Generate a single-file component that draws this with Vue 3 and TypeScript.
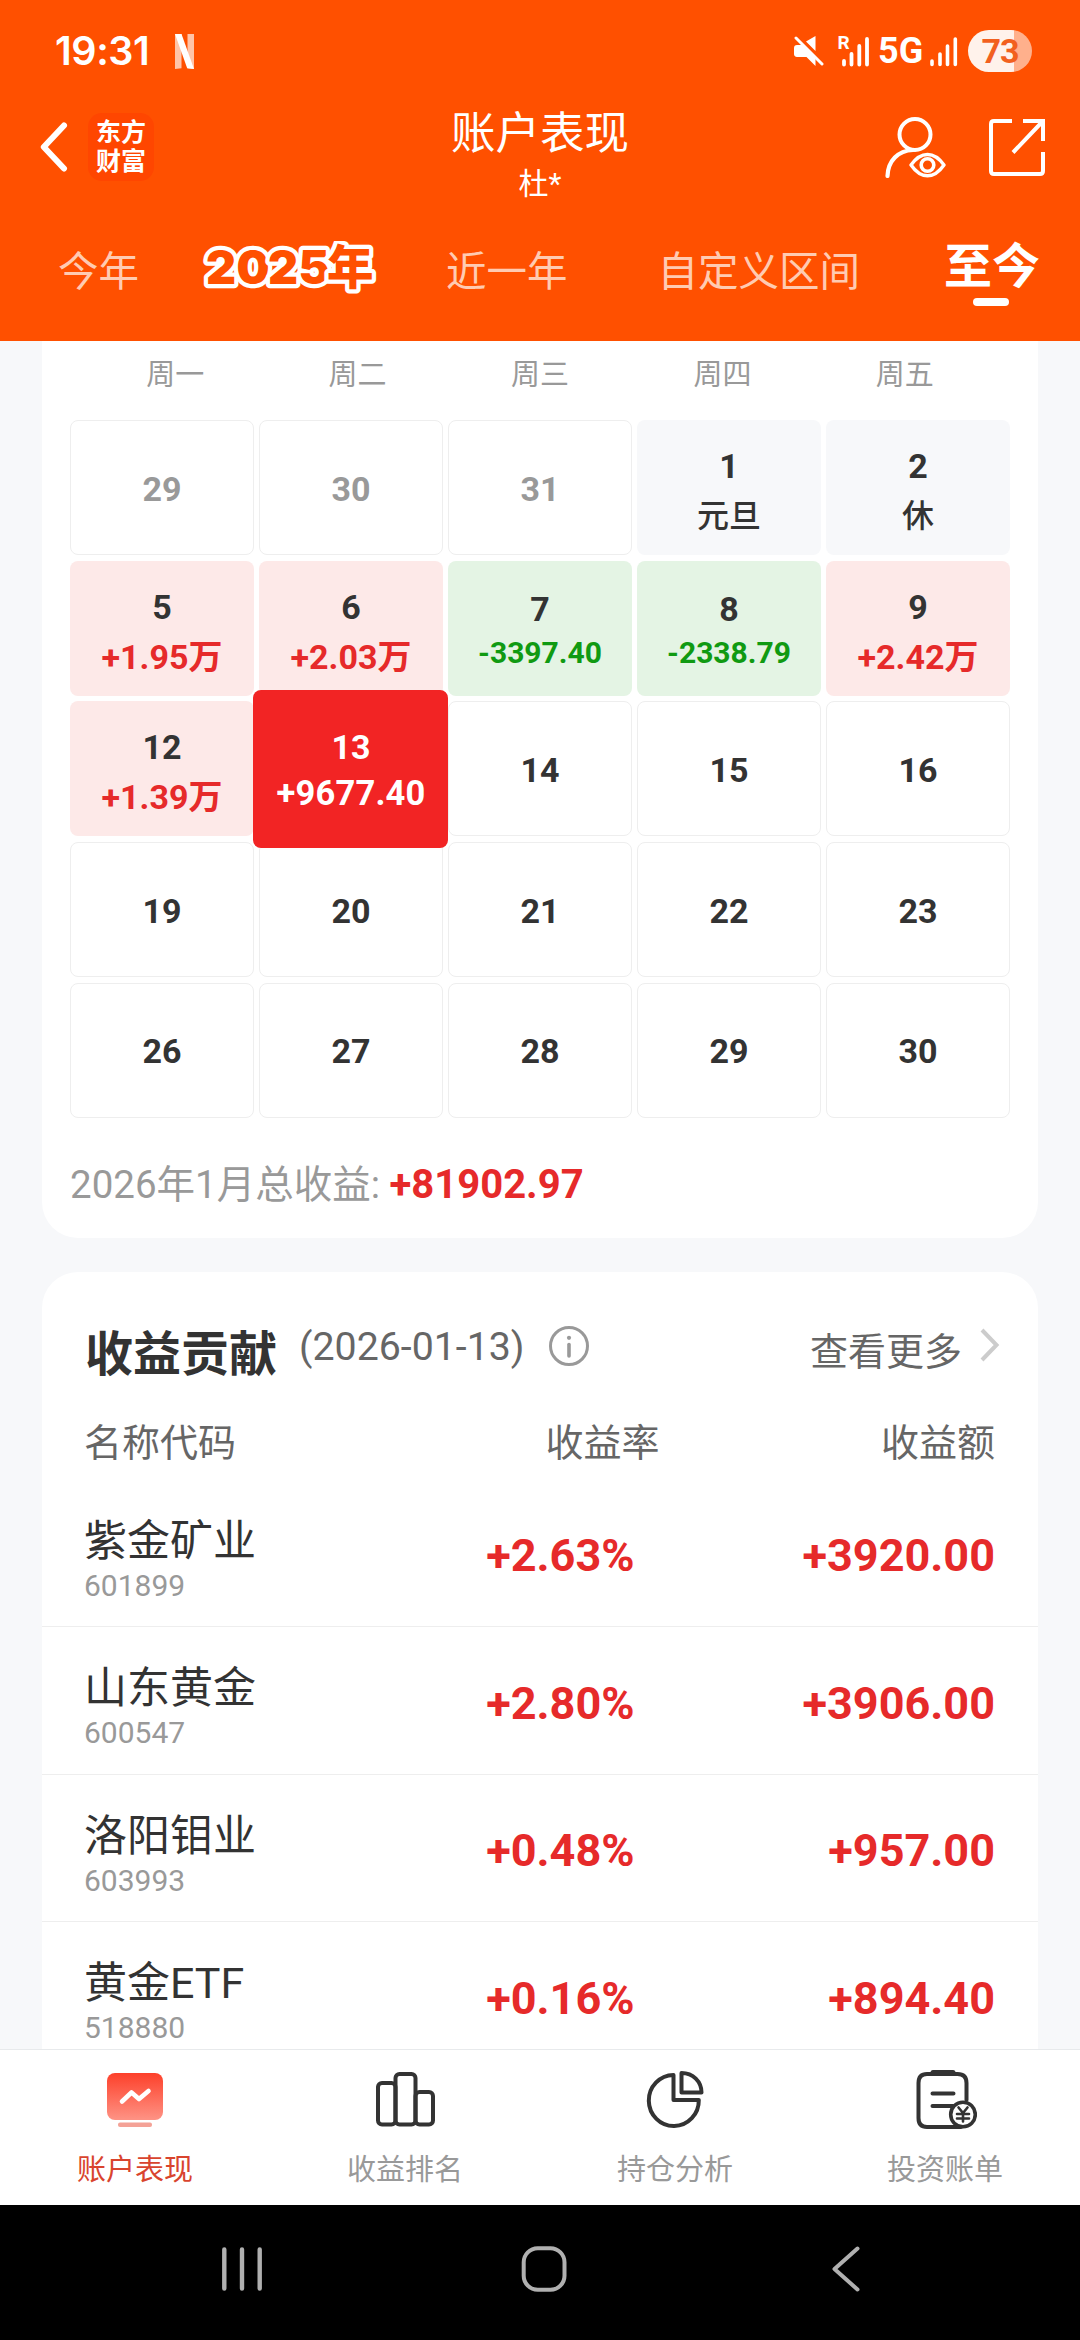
<script setup lang="ts">
type DayKind = 'plain' | 'muted' | 'rest' | 'up' | 'down' | 'selected'

interface Day {
  day: number
  kind: DayKind
  note?: string
}

interface Holding {
  name: string
  code: string
  rate: string
  amount: string
}

const weekdays: string[] = ['周一', '周二', '周三', '周四', '周五']

const days: Day[] = [
  { day: 29, kind: 'muted' },
  { day: 30, kind: 'muted' },
  { day: 31, kind: 'muted' },
  { day: 1, kind: 'rest', note: '元旦' },
  { day: 2, kind: 'rest', note: '休' },
  { day: 5, kind: 'up', note: '+1.95万' },
  { day: 6, kind: 'up', note: '+2.03万' },
  { day: 7, kind: 'down', note: '-3397.40' },
  { day: 8, kind: 'down', note: '-2338.79' },
  { day: 9, kind: 'up', note: '+2.42万' },
  { day: 12, kind: 'up', note: '+1.39万' },
  { day: 13, kind: 'selected', note: '+9677.40' },
  ...[14, 15, 16, 19, 20, 21, 22, 23, 26, 27, 28, 29, 30].map(
    (day): Day => ({ day, kind: 'plain' }),
  ),
]

const holdings: Holding[] = [
  { name: '紫金矿业', code: '601899', rate: '+2.63%', amount: '+3920.00' },
  { name: '山东黄金', code: '600547', rate: '+2.80%', amount: '+3906.00' },
  { name: '洛阳钼业', code: '603993', rate: '+0.48%', amount: '+957.00' },
  { name: '黄金ETF', code: '518880', rate: '+0.16%', amount: '+894.40' },
]
</script>

<template>
  <div class="screen">
    <header class="header">
      <div class="status">
        <span class="clock">19:31</span>
        <svg class="netflix" width="19" height="35" viewBox="0 0 19 35">
          <path d="M0 0h6.5v34.2L0 35zM12.500 0H19v35l-6.500-.8z" fill="#ffc4a8" />
          <path d="M0 0h6.500L19 35l-6.800-.8z" fill="#fff" />
        </svg>
        <div class="status-right">
          <svg class="mute" width="30" height="30" viewBox="0 0 30 30">
            <path d="M12 5.500 21.500 0v15zM3 9h6l12.500 12.500V30l-9-9H3q-3-.5-3-3v-6q0-3 3-3z" fill="#fff" />
            <path d="M2 2 28 28" stroke="#fff" stroke-width="3" stroke-linecap="round" />
          </svg>
          <svg class="signal-r" width="34" height="42" viewBox="0 -4 34 42">
            <text x="0.500" y="15" font-family="Roboto" font-weight="700" font-size="19" fill="#fff">R</text>
            <path d="M7 27v3.500M14.500 20v10.500M22.300 12v18.500M30 5v25.500" stroke="#fff" stroke-width="3.800" stroke-linecap="round" />
          </svg>
          <span class="net">5G</span>
          <svg class="signal" width="28" height="32" viewBox="0 0 28 32">
            <path d="M2 26v3.500M10 19v10.500M17.500 11v18.500M25.300 4v25.500" stroke="#fff" stroke-width="3.600" stroke-linecap="round" />
          </svg>
          <span class="battery">73</span>
        </div>
      </div>

      <div class="nav">
        <div class="nav-left">
          <svg width="28" height="50" viewBox="0 0 28 50">
            <path d="M24 3.500 3.800 25 24 46.500" fill="none" stroke="#fff" stroke-width="6" stroke-linecap="round" stroke-linejoin="round" />
          </svg>
          <div class="logo"><span>东方</span><span>财富</span></div>
        </div>
        <div class="nav-title">
          <h1>账户表现</h1>
          <p>杜*</p>
        </div>
        <div class="nav-right">
          <svg width="62" height="62" viewBox="0 0 62 62" fill="none" stroke="#fff" stroke-linecap="round">
            <circle cx="31" cy="18.500" r="15.500" stroke-width="4" />
            <path d="M3.500 60C4 45 14 34.500 29 34" stroke-width="4.200" />
            <path d="M27 49Q34.500 38.500 43.500 38.500T60 49Q52.500 59.800 43.500 59.800T27 49z" stroke-width="3.400" stroke-linejoin="round" />
            <circle cx="43.500" cy="49" r="6.300" stroke-width="3.600" />
          </svg>
          <svg width="56" height="57" viewBox="0 0 56 57" fill="none" stroke="#fff" stroke-width="4">
            <path d="M23 2H5Q2 2 2 5V52Q2 55 5 55H51Q54 55 54 52V33M34 2H54V22M54 2 24 33.500" />
          </svg>
        </div>
      </div>

      <nav class="tabs">
        <span class="tab">今年</span>
        <svg class="year" width="184" height="61" viewBox="0 0 184 61">
          <text x="4 34.500 66 96.500 125" y="43">2025年</text>
        </svg>
        <span class="tab recent">近一年</span>
        <span class="tab custom">自定义区间</span>
        <span class="tab active">至今</span>
      </nav>
    </header>

    <main class="content">
      <section class="card calendar">
        <div class="weekdays">
          <span v-for="w in weekdays" :key="w">{{ w }}</span>
        </div>
        <div class="days">
          <div v-for="(d, i) in days" :key="i" class="cell" :class="[d.kind, { single: !d.note }]">
            <span class="num">{{ d.day }}</span>
            <span v-if="d.note" class="note">{{ d.note }}</span>
          </div>
        </div>
        <p class="summary">2026年1月总收益: <b>+81902.97</b></p>
      </section>

      <section class="card contribution">
        <div class="head">
          <h2>收益贡献</h2>
          <span class="date">(2026-01-13)</span>
          <svg class="info" width="40" height="40" viewBox="0 0 40 40" fill="none" stroke="#999">
            <circle cx="20" cy="20" r="18.500" stroke-width="3" />
            <path d="M20 18.500V30" stroke-width="3.600" stroke-linecap="round" />
            <circle cx="20" cy="11.800" r="2.100" fill="#999" stroke="none" />
          </svg>
          <span class="more">查看更多</span>
          <svg class="chev" width="20" height="34" viewBox="0 0 20 34">
            <path d="M2 2 16.500 17 2 32" fill="none" stroke="#ccc" stroke-width="4" />
          </svg>
        </div>
        <div class="cols">
          <span>名称代码</span><span class="c-rate">收益率</span><span class="c-amount">收益额</span>
        </div>
        <div v-for="h in holdings" :key="h.code" class="row">
          <div class="stock">
            <span class="name">{{ h.name }}</span>
            <span class="code">{{ h.code }}</span>
          </div>
          <span class="rate">{{ h.rate }}</span>
          <span class="amount">{{ h.amount }}</span>
        </div>
      </section>
    </main>

    <footer class="tabbar">
      <div class="item on">
        <svg width="64" height="64" viewBox="0 0 64 64">
          <defs>
            <linearGradient id="tile" x1="0" y1="0" x2="0" y2="1">
              <stop offset="0" stop-color="#fd402a" />
              <stop offset="1" stop-color="#fe9385" />
            </linearGradient>
          </defs>
          <rect x="4" y="5" width="56" height="47" rx="8" fill="url(#tile)" />
          <path d="M19 33.500 28.500 24.500 36 31 45.500 23" fill="none" stroke="#fff" stroke-width="4.600" stroke-linecap="round" stroke-linejoin="round" />
          <rect x="15" y="54.500" width="34" height="4.500" rx="2" fill="#f4a297" />
        </svg>
        <span>账户表现</span>
      </div>
      <div class="item">
        <svg width="64" height="64" viewBox="0 0 64 64" fill="none" stroke="#333" stroke-width="4">
          <rect x="5" y="15" width="17.500" height="41.500" rx="4" />
          <rect x="22.500" y="6" width="20" height="50.500" rx="4" />
          <rect x="42.500" y="24" width="17.500" height="32.500" rx="4" />
        </svg>
        <span>收益排名</span>
      </div>
      <div class="item">
        <svg width="64" height="64" viewBox="0 0 64 64" fill="none" stroke="#333" stroke-width="4" stroke-linejoin="round">
          <path d="M30.500 7A25 25.500 0 1 0 55.800 32H30.500z" />
          <path d="M38.500 5V24.500H58.500C58.500 13.500 50 5 38.500 5z" />
        </svg>
        <span>持仓分析</span>
      </div>
      <div class="item">
        <svg width="64" height="64" viewBox="0 0 64 64" fill="none" stroke="#333" stroke-width="4" stroke-linecap="round">
          <path d="M53.500 32V15Q53.500 6 44.500 6H14Q5.500 6 5.500 15V50Q5.500 59 14 59H48" />
          <path d="M20 4.500H40" stroke-width="5" />
          <path d="M19.500 25.500H40.500M19.500 38H40" />
          <circle cx="50" cy="46.500" r="12.300" fill="#fff" stroke-width="3.600" />
          <path d="M45.500 39.500 50 45 54.500 39.500M44 46H56M44 50.500H56M50 45V53.500" stroke-width="2.600" />
        </svg>
        <span>投资账单</span>
      </div>
    </footer>

    <div class="sysnav">
      <svg class="recents" width="44" height="48" viewBox="0 0 44 48">
        <path d="M4.300 4.500V43.500M22 4.500V43.500M39.700 4.500V43.500" stroke="#b0b0b0" stroke-width="4.400" stroke-linecap="round" />
      </svg>
      <svg class="home" width="48" height="48" viewBox="0 0 48 48">
        <rect x="3.700" y="3.200" width="40.800" height="41.600" rx="14" fill="none" stroke="#b0b0b0" stroke-width="4" />
      </svg>
      <svg class="back" width="32" height="48" viewBox="0 0 32 48">
        <path d="M27.500 3.500 4.500 24 27.500 44.500" fill="none" stroke="#b0b0b0" stroke-width="4" stroke-linecap="round" stroke-linejoin="round" />
      </svg>
    </div>
  </div>
</template>

<style>
body {
  margin: 0;
}
</style>

<style scoped>
.screen {
  width: 1080px;
  height: 2340px;
  display: flex;
  flex-direction: column;
  overflow: hidden;
  background: #f7f8fa;
  color: #333;
  font-family: Roboto, 'Noto Sans CJK SC', sans-serif;
}
h1, h2, p {
  margin: 0;
  font-weight: 400;
}
svg {
  display: block;
  flex: none;
}
span, p, h1, h2 {
  white-space: nowrap;
}

/* header */
.header {
  height: 341px;
  flex: none;
  background: #ff5000;
  color: #fff;
}
.status {
  box-sizing: border-box;
  height: 94px;
  padding: 8px 48px 0 55px;
  display: flex;
  align-items: center;
}
.clock {
  width: 96px;
  font: 600 39.500px/50px Inter, sans-serif;
  letter-spacing: -0.400px;
}
.netflix {
  margin-left: 24px;
}
.status-right {
  margin-left: auto;
  display: flex;
  align-items: center;
}
.mute {
  margin-right: 13px;
}
.net {
  width: 44px;
  margin: 0 8px 0 7px;
  font-size: 36px;
  font-weight: 700;
  line-height: 44px;
}
.signal {
  margin-right: 10px;
}
.battery {
  width: 64px;
  height: 42px;
  border-radius: 21px;
  background: linear-gradient(90deg, #fff2eb 46px, #ffb08c 46px);
  color: #f2601e;
  font-size: 34px;
  font-weight: 700;
  line-height: 43px;
  letter-spacing: -1px;
  text-align: center;
}
.nav {
  height: 106px;
  display: grid;
  grid-template-columns: 1fr auto 1fr;
}
.nav-left {
  display: flex;
  align-items: center;
  padding-left: 40px;
}
.logo {
  box-sizing: border-box;
  width: 66px;
  height: 68px;
  margin-left: 20px;
  padding-top: 5px;
  border-radius: 14px;
  background: #ff4600;
  display: flex;
  flex-direction: column;
  align-items: center;
  font-size: 25px;
  font-weight: 700;
  line-height: 29px;
}
.nav-title {
  padding-top: 12px;
  text-align: center;
}
.nav-title h1 {
  font-size: 44.5px;
  line-height: 56px;
}
.nav-title p {
  margin-top: 7px;
  font-size: 30px;
  line-height: 30px;
}
.nav-right {
  display: flex;
  align-items: center;
  justify-content: flex-end;
  gap: 43px;
  padding-right: 35px;
}
.tabs {
  display: flex;
  padding: 41px 0 0 58px;
}
.tab {
  color: #ffcbb2;
  font-size: 40.500px;
  line-height: 62px;
}
.year {
  margin-left: 63px;
}
.year text {
  font-family: Inter, 'Noto Sans CJK SC', sans-serif;
  font-size: 46.500px;
  font-weight: 900;
  fill: #ff5000;
  stroke: #fff;
  stroke-width: 8.500px;
  stroke-linejoin: round;
  paint-order: stroke fill;
}
.recent {
  margin-left: 60px;
}
.custom {
  margin-left: 90px;
}
.active {
  position: relative;
  margin-left: 84px;
  color: #fff;
  font-size: 48px;
  font-weight: 700;
  line-height: 51px;
}
.active::after {
  content: '';
  position: absolute;
  left: 29px;
  top: 57px;
  width: 36px;
  height: 8px;
  border-radius: 4px;
  background: #fff;
}

/* cards */
.content {
  height: 1708px;
  flex: none;
  overflow: hidden;
}
.card {
  margin: 0 42px;
  background: #fff;
}
.calendar {
  height: 897px;
  border-radius: 0 0 36px 36px;
}
.weekdays {
  display: grid;
  grid-template-columns: repeat(5, 1fr);
  padding: 0 42px;
  height: 68px;
  line-height: 68px;
  font-size: 29px;
  color: #999;
  text-align: center;
}
.days {
  display: grid;
  grid-template-columns: repeat(5, 1fr);
  grid-auto-rows: 135px;
  gap: 5.700px 5px;
  padding: 11px 28px 0;
}
.cell {
  box-sizing: border-box;
  position: relative;
  border-radius: 8px;
  padding-top: 7px;
  display: flex;
  flex-direction: column;
  align-items: center;
  justify-content: center;
  font-size: 34px;
  font-weight: 700;
  line-height: 50px;
}
.cell.single {
  padding-top: 2px;
  border: 1px solid #eee;
}
.cell.muted {
  color: #999;
}
.cell.rest {
  background: #f7f8fa;
}
.rest .note {
  font-size: 32px;
  font-weight: 500;
}
.cell.up {
  background: #fde9e8;
}
.up .note {
  color: #e62a2a;
}
.cell.down {
  background: #e4f4e4;
  padding-top: 6px;
  line-height: 44px;
}
.down .note {
  color: #109a12;
  font-size: 30px;
}
.cell.selected {
  z-index: 1;
  padding-top: 2px;
  color: #fff;
  line-height: 46px;
}
.selected .note {
  font-size: 34.500px;
  letter-spacing: 0.200px;
}
.selected::before {
  content: '';
  position: absolute;
  z-index: -1;
  inset: -11px -5px -12px -6px;
  border-radius: 8px;
  background: #f22424;
}
.summary {
  margin: 37px 0 0 28px;
  font-size: 38.500px;
  line-height: 60px;
  color: #999;
}
.summary b {
  font-size: 40px;
  line-height: 1;
  font-weight: 700;
  color: #e62a2a;
}
.contribution {
  margin-top: 34px;
  height: 900px;
  border-radius: 36px;
}
.head {
  display: flex;
  align-items: center;
  height: 80px;
  padding: 38px 38px 0 43px;
}
.head h2 {
  font-size: 48px;
  font-weight: 700;
}
.date {
  margin: -6px 0 0 22px;
  font-size: 39.300px;
  color: #666;
}
.info {
  margin: -8px 0 0 24px;
}
.more {
  margin: -4px 18px 0 auto;
  font-size: 38px;
  color: #666;
}
.chev {
  margin-top: -10px;
}
.cols, .row {
  display: grid;
  grid-template-columns: 300px 1fr 1fr;
  padding: 0 43px 0 42px;
}
.cols {
  margin: 23px 0 6.500px;
  font-size: 38px;
  line-height: 60px;
  color: #666;
}
.cols .c-rate {
  text-align: right;
  padding-right: 30px;
}
.c-amount, .amount {
  text-align: right;
}
.row {
  box-sizing: border-box;
  height: 147.500px;
  align-items: center;
  border-bottom: 1.500px solid #eee;
}
.stock {
  display: flex;
  flex-direction: column;
  padding-top: 12px;
}
.name {
  font-size: 43px;
  line-height: 54px;
}
.code {
  font-size: 30px;
  line-height: 36px;
  color: #999;
}
.rate, .amount {
  padding-top: 6px;
  font-size: 45px;
  font-weight: 700;
  color: #e62a2a;
}
.rate {
  text-align: right;
  padding-right: 55px;
}

/* bottom bars */
.tabbar {
  box-sizing: border-box;
  height: 156px;
  flex: none;
  display: grid;
  grid-template-columns: repeat(4, 1fr);
  border-top: 1px solid #e8eaec;
  background: #fff;
}
.item {
  display: flex;
  flex-direction: column;
  align-items: center;
  padding-top: 18px;
  font-size: 29px;
  line-height: 40px;
  color: #999;
}
.item span {
  margin-top: 18px;
}
.item.on {
  color: #d9442e;
}
.sysnav {
  height: 135px;
  flex: none;
  display: flex;
  align-items: flex-start;
  padding: 40px 0 0 220px;
  box-sizing: border-box;
  background: #000;
}
.home {
  margin-left: 256px;
}
.back {
  margin-left: 262px;
}
</style>
